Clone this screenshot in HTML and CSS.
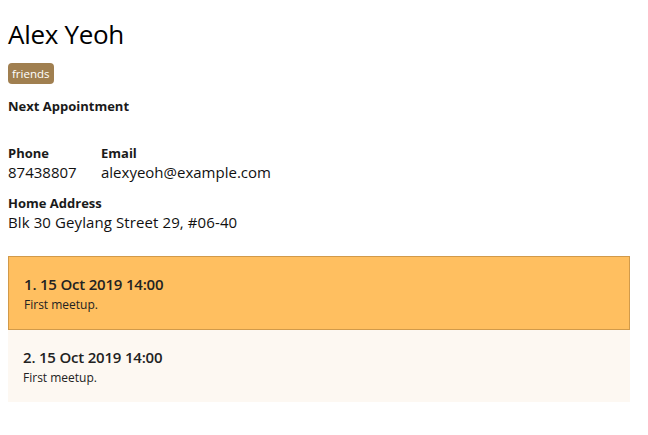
FILE: index.html
```html
<!DOCTYPE html>
<html>
<head>
<meta charset="utf-8">
<link rel="stylesheet" href="styles.css">
</head>
<body>
<div class="page">
  <h1 class="name">Alex Yeoh</h1>
  <div class="tags"><span class="tag">friends</span></div>
  <div class="label next">Next Appointment</div>
  <div class="contact">
    <div class="field phone">
      <div class="label">Phone</div>
      <div class="value">87438807</div>
    </div>
    <div class="field">
      <div class="label">Email</div>
      <div class="value">alexyeoh@example.com</div>
    </div>
  </div>
  <div class="field address">
    <div class="label">Home Address</div>
    <div class="value">Blk 30 Geylang Street 29, #06-40</div>
  </div>
  <div class="list">
    <div class="card selected">
      <div class="card-title">1. 15 Oct 2019 14:00</div>
      <div class="card-desc">First meetup.</div>
    </div>
    <div class="card">
      <div class="card-title">2. 15 Oct 2019 14:00</div>
      <div class="card-desc">First meetup.</div>
    </div>
  </div>
</div>
</body>
</html>
```
FILE: styles.css
```css
html, body { margin: 0; padding: 0; background: #fff; }
body { font-family: "Open Sans", "Noto Sans", sans-serif; color: #000; }
.page { padding: 17px 18px 0 8px; width: 622px; }
.name { font-weight: 400; font-size: 26px; line-height: 34px; margin: 0; letter-spacing: -0.3px; }
.tags { margin-top: 12px; display: flex; }
.tag { background: #a07f50; color: #fff; font-size: 11.5px; line-height: 21px; padding: 0 4px; border-radius: 4px; }
.label { font-weight: 700; font-size: 13px; line-height: 18px; color: #1a1a1a; }
.next { margin-top: 13px; }
.contact { display: flex; margin-top: 29px; }
.phone { width: 93px; }
.value { font-size: 15px; line-height: 20px; color: #111; }
.address { margin-top: 12px; }
.address .value { letter-spacing: 0.1px; }
.list { margin-top: 24px; }
.card { background: #fdf8f2; padding: 17px 15px 15px 15px; }
.card.selected { background: #ffbf60; border: 1px solid #d19a4a; }
.card-title { font-size: 15px; font-weight: 600; line-height: 20px; color: #222; letter-spacing: -0.2px; }
.card-desc { font-size: 12px; line-height: 18px; color: #222; margin-top: 2px; }
```
